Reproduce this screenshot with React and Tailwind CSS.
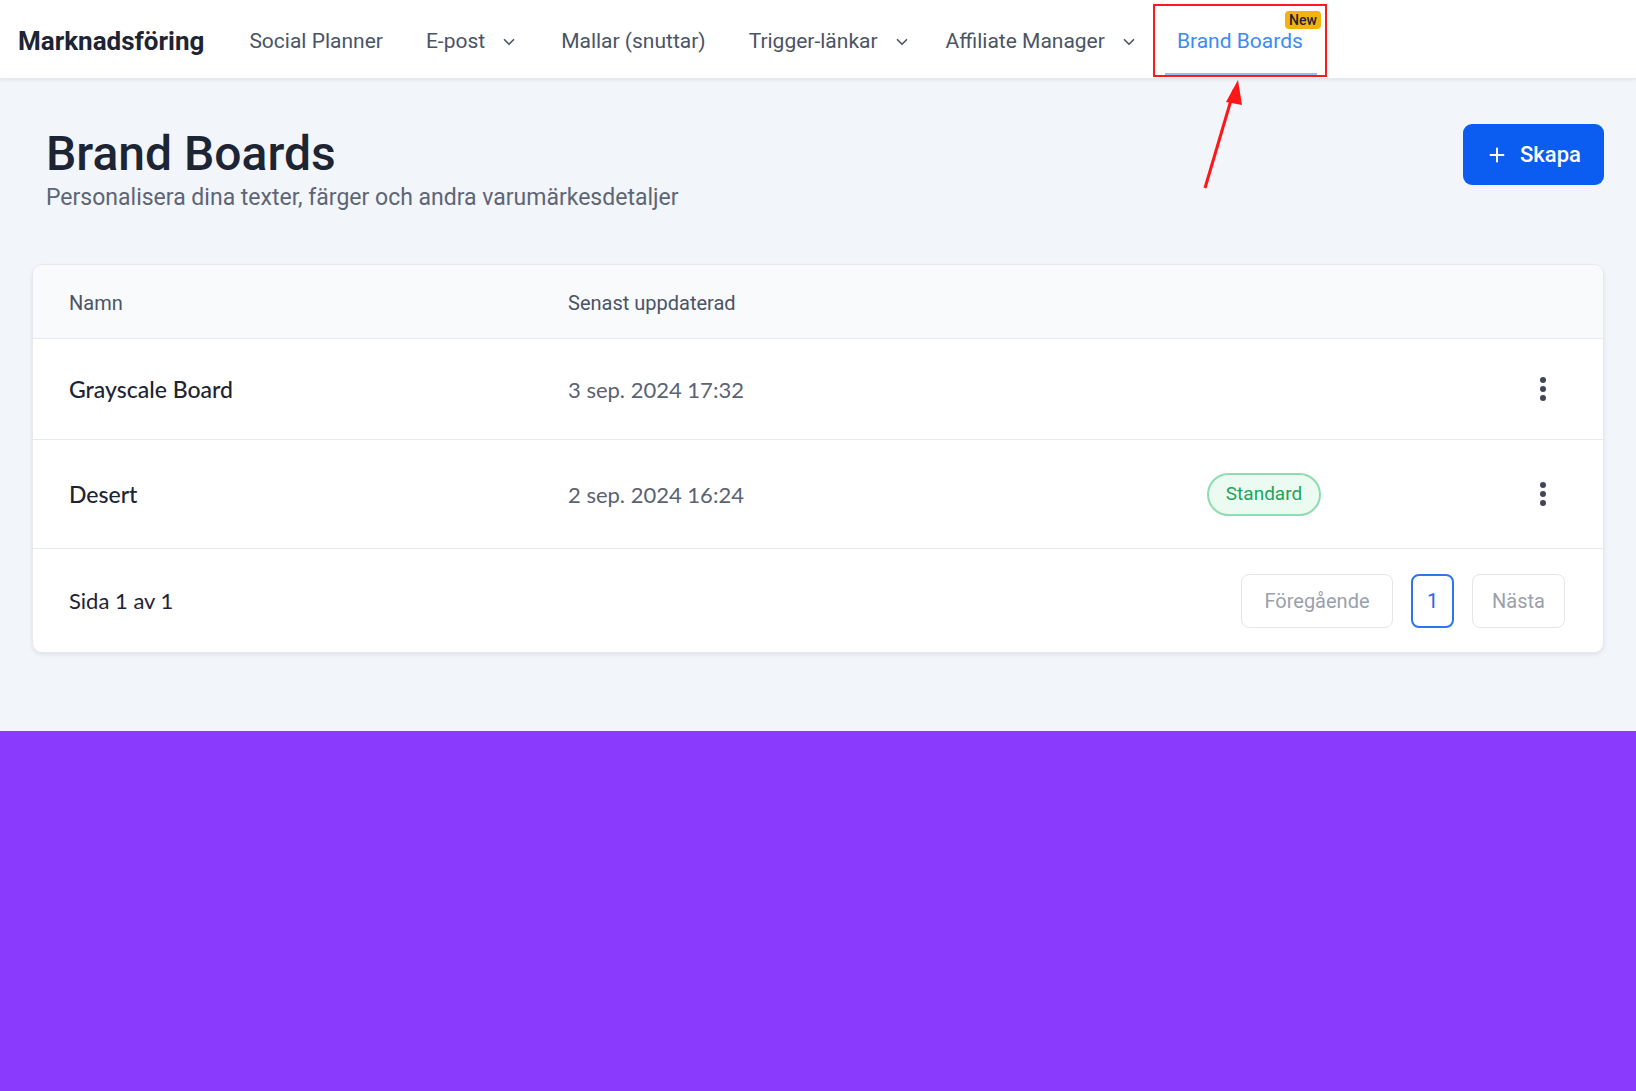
import { ChevronDown, Plus } from "lucide-react";

const navItems = [
  { label: "Social Planner" },
  { label: "E-post", dropdown: true },
  { label: "Mallar (snuttar)" },
  { label: "Trigger-länkar", dropdown: true },
  { label: "Affiliate Manager", dropdown: true, tight: true },
];

const boards = [
  { name: "Grayscale Board", updated: "3 sep. 2024 17:32", h: "h-[101px]" },
  { name: "Desert", updated: "2 sep. 2024 16:24", standard: true, h: "h-[109px]" },
];

function Kebab() {
  return (
    <svg width="8" height="26" viewBox="0 0 8 26" className="text-[#3f4657]">
      <circle cx="4" cy="4" r="3" fill="currentColor" />
      <circle cx="4" cy="13" r="3" fill="currentColor" />
      <circle cx="4" cy="22" r="3" fill="currentColor" />
    </svg>
  );
}

export default function App() {
  return (
    <div className="min-h-[1091px] flex flex-col bg-[#8a3afd] font-['Roboto',sans-serif]">
      <div className="bg-[#f2f5f9] relative">
        <nav className="h-[79px] bg-white flex items-center pl-[18px] border-b border-[#e3e7ee] shadow-[0_1px_3px_rgba(16,24,40,0.08)]">
          <span className="text-[26px] font-bold text-[#1d2433] mr-[45px] mt-[4px]">Marknadsföring</span>
          <div className="flex items-center gap-[43px] h-full">
            {navItems.map((item) => (
              <div
                key={item.label}
                className={`flex items-center gap-[15px] text-[21px] text-[#4a5466] mt-[5px] ${item.tight ? "-ml-[8px]" : ""}`}
              >
                <span>{item.label}</span>
                {item.dropdown && <ChevronDown size={18} strokeWidth={2.2} />}
              </div>
            ))}
            <div className="relative -ml-[28px] h-[73px] self-start mt-[4px] border-2 border-[#ff1a1a] px-[22px] flex items-center">
              <span className="text-[21px] text-[#3b8cf2] mt-[2px]">Brand Boards</span>
              <span className="absolute top-[5px] right-[4px] bg-[#f4b30c] text-[#1d2433] text-[14px] font-medium leading-none px-[4px] py-[2px] rounded-[4px]">
                New
              </span>
              <span className="absolute bottom-[0px] left-[10px] right-[8px] h-[2px] bg-[#93bff7]" />
            </div>
          </div>
        </nav>

        <svg className="absolute left-[1190px] top-[76px]" width="60" height="116" viewBox="0 0 60 116">
          <line x1="15" y1="112" x2="44" y2="14" stroke="#ff1616" strokeWidth="3" />
          <polygon points="48,4 36,26 52,29" fill="#ff1616" />
        </svg>

        <main className="px-[32px] pb-[78px]">
          <div className="flex items-start justify-between pt-[45px] pl-[14px]">
            <div>
              <h1 className="text-[48px] font-medium text-[#1d2433] leading-[60px]">Brand Boards</h1>
              <p className="text-[23px] leading-[30px] text-[#5d6576] -mt-[1px]">
                Personalisera dina texter, färger och andra varumärkesdetaljer
              </p>
            </div>
            <button className="w-[141px] h-[61px] rounded-[9px] bg-[#0b5cf0] text-white text-[22px] font-medium flex items-center justify-center gap-[12px]">
              <Plus size={22} strokeWidth={2.2} />
              Skapa
            </button>
          </div>

          <div className="mt-[51px] bg-white rounded-[10px] border border-[#e6e9ef] shadow-[0_2px_4px_rgba(16,24,40,0.08)] overflow-hidden">
            <div className="h-[74px] bg-[#f9fafb] border-b border-[#e6e9ef] grid grid-cols-[499px_1fr] items-center px-[36px] pt-[3px] text-[20px] text-[#4a5466]">
              <span>Namn</span>
              <span>Senast uppdaterad</span>
            </div>
            {boards.map((b) => (
              <div
                key={b.name}
                className={`${b.h} border-b border-[#e6e9ef] grid grid-cols-[499px_1fr_auto_auto] items-center pl-[36px] pr-[56px] font-['Lato',sans-serif]`}
              >
                <span className="text-[23px] font-medium text-[#1d2433]">{b.name}</span>
                <span className="text-[22px] text-[#5a6273]">{b.updated}</span>
                <span className="w-[114px] mr-[218px] flex justify-center">
                  {b.standard && (
                    <span className="w-[114px] h-[43px] rounded-full border-2 border-[#8fdcae] bg-[#ecfbf2] text-[#22a35a] text-[19px] flex items-center justify-center font-['Roboto',sans-serif]">
                      Standard
                    </span>
                  )}
                </span>
                <Kebab />
              </div>
            ))}
            <div className="h-[103px] flex items-center justify-between pl-[36px] pr-[38px]">
              <span className="text-[22px] text-[#1d2433] font-['Lato',sans-serif]">Sida 1 av 1</span>
              <div className="flex items-center gap-[18px] text-[20px]">
                <button className="h-[54px] w-[152px] rounded-[8px] border border-[#e3e6eb] text-[#9aa1ad]">Föregående</button>
                <button className="h-[54px] w-[43px] rounded-[8px] border-2 border-[#2f74f0] text-[#1f66ee]">1</button>
                <button className="h-[54px] w-[93px] rounded-[8px] border border-[#e3e6eb] text-[#9aa1ad]">Nästa</button>
              </div>
            </div>
          </div>
        </main>
      </div>
      <div className="flex-1" />
    </div>
  );
}
